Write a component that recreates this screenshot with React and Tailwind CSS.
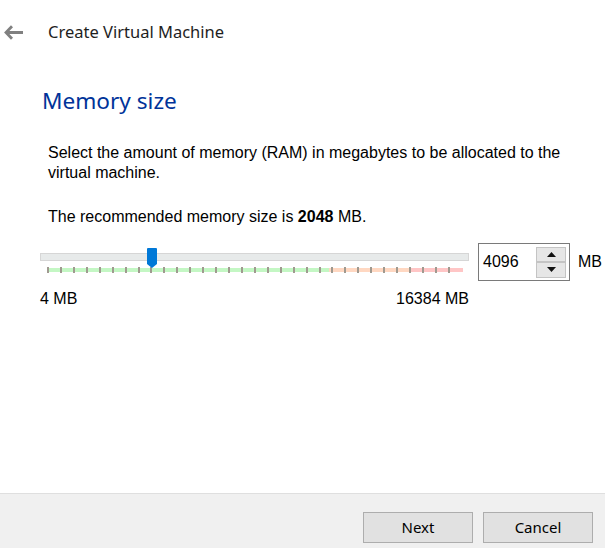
import React from 'react';

const ticks = Array.from({ length: 32 }, (_, i) => Math.round(i * 12.93));

const SpinButton = ({ up }) => (
  <div className="flex-1 flex items-center justify-center bg-[#e6e6e6] border border-[#c4c4c4]">
    <svg width="9" height="5" viewBox="0 0 9 5">
      {up ? <polygon points="0,5 9,5 4.5,0" fill="#111" /> : <polygon points="0,0 9,0 4.5,5" fill="#111" />}
    </svg>
  </div>
);

const MemorySlider = () => (
  <div className="relative w-[429px] h-[38px]">
    {/* track */}
    <div className="mt-[10px] h-[8px] bg-[#e7eaea] border border-[#d6d6d6]" />
    {/* coloured tick strip */}
    <div className="relative ml-[7px] mt-[7px] w-[416px] h-[4px] flex">
      <div className="w-[282px] h-full bg-[#c4f7c4]" />
      <div className="w-[80px] h-full bg-[#ffd8c2]" />
      <div className="flex-1 h-full bg-[#ffc6c6]" />
      {ticks.map((x) => (
        <div key={x} className="absolute top-[-1px] w-[2px] h-[6px] bg-[#a09a90]" style={{ left: x }} />
      ))}
    </div>
    {/* thumb */}
    <svg className="absolute left-[107px] top-[5px]" width="10" height="20" viewBox="0 0 10 20">
      <path d="M1 0 H9 Q10 0 10 1 V16 L5 20 L0 16 V1 Q0 0 1 0 Z" fill="#0078d7" />
    </svg>
  </div>
);

const App = () => {
  return (
    <div className="w-[605px] h-[548px] bg-white flex flex-col overflow-hidden">
      <header className="h-[64px] flex items-center">
        <svg className="ml-[4px]" width="19" height="15" viewBox="0 0 19 15">
          <path d="M8 1.2 L2 7.5 L8 13.8 M2.5 7.5 H19" stroke="#808080" strokeWidth="2.8" fill="none" />
        </svg>
        <h1 className="ml-[25px] text-[16.5px] text-[#1e1e1e] font-['Noto_Sans',sans-serif]">
          Create Virtual Machine
        </h1>
      </header>

      <div className="pl-[42px] mt-[22px] h-[30px] leading-[30px] text-[22.6px] text-[#003399] font-['Noto_Sans',sans-serif]">
        Memory size
      </div>

      <div className="pl-[48px] pr-[30px] font-['Liberation_Sans',sans-serif] text-[16px] leading-[20px] text-black">
        <p className="mt-[27px]">
          Select the amount of memory (RAM) in megabytes to be allocated to the virtual machine.
        </p>
        <p className="mt-[24px]">
          The recommended memory size is <b>2048</b> MB.
        </p>
      </div>

      <div className="mt-[16px] pl-[40px] flex items-start font-['Liberation_Sans',sans-serif] text-[16px]">
        <MemorySlider />
        <div className="ml-[9px] w-[92px] h-[38px] border border-[#7a7a7a] flex items-center pl-[4px] pr-[3px] py-[2px]">
          <span className="flex-1">4096</span>
          <div className="w-[30px] h-[31px] flex flex-col">
            <SpinButton up />
            <SpinButton />
          </div>
        </div>
        <span className="ml-[8px] leading-[38px]">MB</span>
      </div>

      <div className="mt-[8px] pl-[40px] w-[469px] flex justify-between font-['Liberation_Sans',sans-serif] text-[16px] leading-[20px]">
        <span>4 MB</span>
        <span>16384 MB</span>
      </div>

      <div className="flex-1" />

      <footer className="h-[55px] border-t border-[#dfdfdf] bg-[#f0f0f0] flex justify-end items-start pt-[18px] pr-[12px] gap-[10px] font-['Noto_Sans',sans-serif] text-[15px] text-black">
        <button className="w-[110px] h-[31px] bg-[#e1e1e1] border border-[#adadad]">Next</button>
        <button className="w-[110px] h-[31px] bg-[#e1e1e1] border border-[#adadad]">Cancel</button>
      </footer>
    </div>
  );
};

export default App;
